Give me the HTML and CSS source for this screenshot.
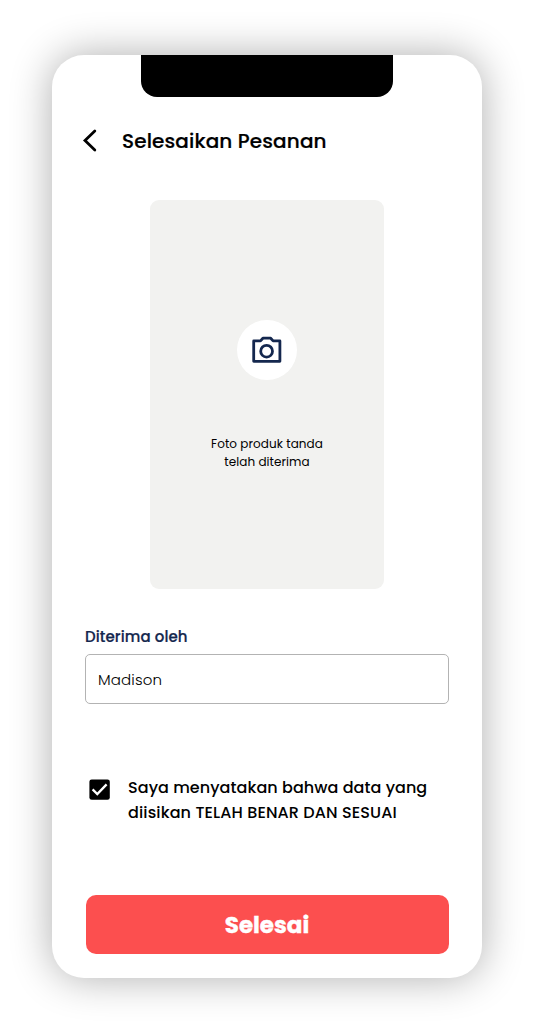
FILE: index.html
```html
<!DOCTYPE html>
<html lang="id">
<head>
<meta charset="utf-8">
<title>Selesaikan Pesanan</title>
<link rel="stylesheet" href="styles.css">
</head>
<body>
<main class="phone">
  <div class="notch"></div>
  <header class="header">
    <svg class="back" width="16" height="24" viewBox="0 0 16 24" fill="none" stroke="#000" stroke-width="2.8" stroke-linecap="round" stroke-linejoin="miter"><path d="M12.8 2 3 11.6l9.8 9.4"/></svg>
    <h1 class="title">Selesaikan Pesanan</h1>
  </header>
  <section class="photo">
    <div class="camera">
      <svg width="30" height="28" viewBox="0 0 30 28" fill="none" stroke="#14274e" stroke-width="2.8" stroke-linejoin="round"><path d="M1.7 4.9h6.8l2.4-2.7h7.8l2.4 2.7h6.8v20.4H1.7z"/><circle cx="14.6" cy="15.2" r="5.9"/></svg>
    </div>
    <p class="caption">Foto produk tanda<br>telah diterima</p>
  </section>
  <label class="label" for="receiver">Diterima oleh</label>
  <input class="field" id="receiver" type="text" value="Madison">
  <div class="consent">
    <svg class="check" width="21" height="21" viewBox="0 0 21 21"><rect x=".4" y=".4" width="20.4" height="20.4" rx="2.3"/><path d="M3.6 10.4l4.7 4.7 9.3-9.7" fill="none" stroke="#fff" stroke-width="2.3"/></svg>
    <p class="statement"><span class="st-one">Saya menyatakan bahwa data yang</span><br><span class="st-two">diisikan TELAH BENAR DAN SESUAI</span></p>
  </div>
  <button class="submit" type="button">Selesai</button>
</main>
</body>
</html>
```
FILE: styles.css
```css
* { box-sizing: border-box; }
body {
  margin: 0;
  padding: 55px 52px;
  background: #fff;
  color: #000;
  font-family: Poppins, Inter, "Open Sans", sans-serif;
}
.phone {
  display: flex;
  flex-direction: column;
  width: 430px;
  height: 923px;
  padding: 0 33px 24px;
  border-radius: 32px;
  background: #fff;
  box-shadow: 0 0 42px rgba(0, 0, 0, .32);
}
.notch {
  align-self: center;
  width: 252px;
  height: 42px;
  border-radius: 0 0 16px 16px;
  background: #000;
}
.header {
  display: flex;
  align-items: center;
  gap: 24px;
  height: 30px;
  margin: 29px 0 0 -3px;
}
.back { display: block; }
.title { margin: 0; font-size: 20px; font-weight: 500; line-height: 30px; letter-spacing: .13px; white-space: nowrap; -webkit-text-stroke: .2px #000; }
.photo {
  display: flex;
  flex-direction: column;
  align-items: center;
  align-self: center;
  width: 234px;
  height: 389px;
  margin-top: 44px;
  padding-top: 120px;
  border-radius: 9px;
  background: #f2f2f0;
}
.camera {
  display: grid;
  place-items: center;
  width: 60px;
  height: 60px;
  border-radius: 50%;
  background: #fff;
}
.caption { margin: 55px 0 0; font-size: 12px; line-height: 18px; letter-spacing: .06px; text-align: center; white-space: nowrap; }
.label { margin-top: 37px; color: #14274e; font-size: 15px; font-weight: 500; line-height: 22px; letter-spacing: .1px; -webkit-text-stroke: .2px #14274e; }
.field {
  width: 364px;
  height: 50px;
  margin-top: 6px;
  padding: 0 12px;
  border: 1px solid #b3b3b3;
  border-radius: 5px;
  background: #fff;
  color: #000;
  font: inherit;
  font-size: 15px;
  font-weight: 300;
  letter-spacing: .15px;
}
.consent { display: flex; gap: 18px; margin: 71px 0 0 4px; }
.check { margin-top: 4px; }
.statement { margin: 0; font-size: 16px; font-weight: 500; line-height: 25px; white-space: nowrap; }
.st-one { letter-spacing: .065px; }
.st-two { letter-spacing: .12px; }
.submit {
  width: 363px;
  height: 59px;
  margin: auto 0 0 1px;
  padding: 0 1px 0 0;
  border: 0;
  border-radius: 10px;
  background: #fc4f4f;
  color: #fff;
  font: inherit;
  font-size: 23px;
  font-weight: 700;
  -webkit-text-stroke: .4px #fff;
}
```
